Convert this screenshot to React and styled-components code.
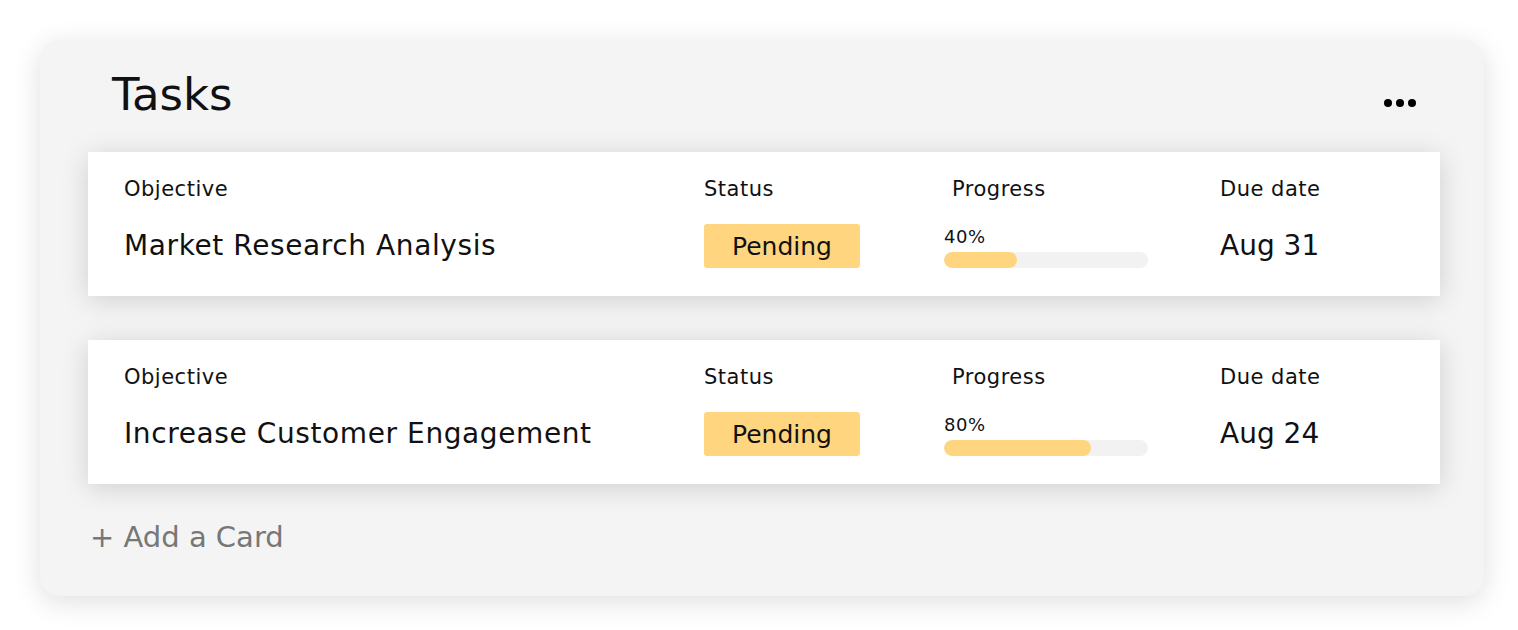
import React from 'react';
import styled, { createGlobalStyle } from 'styled-components';

const GlobalStyle = createGlobalStyle`
  body {
    margin: 0;
    background: #fff;
    font-family: "DejaVu Sans", "Noto Sans", sans-serif;
    color: #111;
  }
`;

const Page = styled.div`
  padding: 40px 34px 34px 40px;
`;

const Board = styled.section`
  background: #f4f4f4;
  border-radius: 20px;
  box-shadow: 0 6px 28px rgba(0, 0, 0, 0.13);
  padding: 0 44px 0 48px;
`;

const Header = styled.header`
  height: 112px;
  display: flex;
  align-items: center;
  justify-content: space-between;
  padding: 0 24px;
`;

const Title = styled.h1`
  margin: 0;
  font-size: 45px;
  font-weight: 400;
  letter-spacing: 0;
  padding-bottom: 4px;
`;

const MoreButton = styled.button`
  border: 0;
  background: none;
  padding: 0;
  display: flex;
  gap: 4px;
  margin-top: 14px;
  cursor: pointer;
  span {
    width: 8px;
    height: 8px;
    border-radius: 50%;
    background: #000;
  }
`;

const CardList = styled.div`
  display: flex;
  flex-direction: column;
  gap: 44px;
`;

const Card = styled.article`
  background: #fff;
  box-shadow: 0 4px 26px rgba(0, 0, 0, 0.15);
  padding: 22px 36px 28px;
  display: grid;
  grid-template-columns: 580px 240px 276px 1fr;
  grid-template-rows: 30px 44px;
  row-gap: 20px;
`;

const Label = styled.div`
  font-size: 21px;
  line-height: 30px;
  letter-spacing: 0.5px;
  padding-left: ${p => (p.indent ? '8px' : '0')};
`;

const Value = styled.div`
  font-size: 28px;
  line-height: 44px;
  align-self: center;
  letter-spacing: ${p => (p.tight ? '0' : '0.6px')};
`;

const Badge = styled.div`
  width: 156px;
  height: 44px;
  border-radius: 3px;
  background: #ffd580;
  font-size: 25px;
  display: flex;
  align-items: center;
  justify-content: center;
`;

const ProgressCell = styled.div`
  align-self: end;
  width: 204px;
`;

const Percent = styled.div`
  font-size: 18px;
  line-height: 20px;
  letter-spacing: 0.5px;
  margin-bottom: 5px;
`;

const Track = styled.div`
  height: 16px;
  border-radius: 8px;
  background: #f2f2f2;
  overflow: hidden;
`;

const Fill = styled.div`
  height: 100%;
  border-radius: 8px;
  background: #ffd580;
`;

const AddCard = styled.button`
  height: 112px;
  border: 0;
  background: none;
  padding: 0 0 6px 2px;
  font-family: inherit;
  font-size: 29px;
  color: #777;
  display: flex;
  align-items: center;
  cursor: pointer;
`;

const tasks = [
  { name: 'Market Research Analysis', status: 'Pending', progress: 40, due: 'Aug 31' },
  { name: 'Increase Customer Engagement', status: 'Pending', progress: 80, due: 'Aug 24' },
];

export default function App() {
  return (
    <Page>
      <GlobalStyle />
      <Board>
        <Header>
          <Title>Tasks</Title>
          <MoreButton aria-label="More">
            <span />
            <span />
            <span />
          </MoreButton>
        </Header>
        <CardList>
          {tasks.map(t => (
            <Card key={t.name}>
              <Label>Objective</Label>
              <Label>Status</Label>
              <Label indent>Progress</Label>
              <Label>Due date</Label>
              <Value>{t.name}</Value>
              <Badge>{t.status}</Badge>
              <ProgressCell>
                <Percent>{t.progress}%</Percent>
                <Track>
                  <Fill style={{ width: `${t.progress * 0.9}%` }} />
                </Track>
              </ProgressCell>
              <Value tight>{t.due}</Value>
            </Card>
          ))}
        </CardList>
        <AddCard>+ Add a Card</AddCard>
      </Board>
    </Page>
  );
}
